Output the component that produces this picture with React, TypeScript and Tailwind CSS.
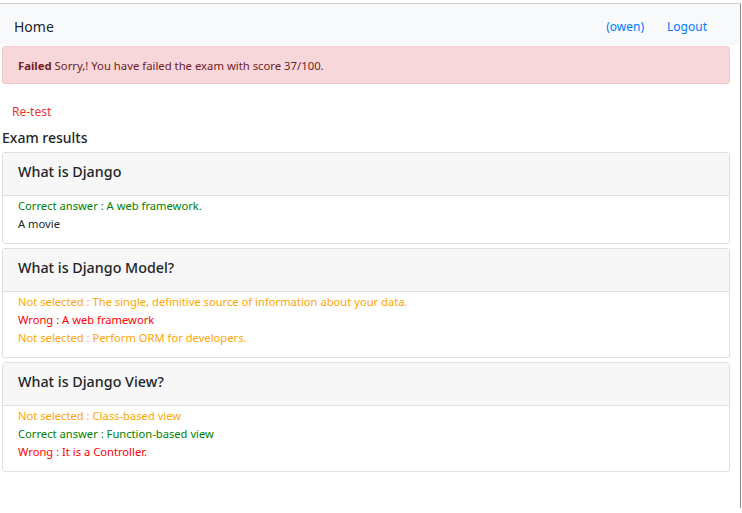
import React from "react";

type Answer = { kind: "correct" | "wrong" | "skip" | "plain"; text: string };

const QUESTIONS: { title: string; answers: Answer[] }[] = [
  {
    title: "What is Django",
    answers: [
      { kind: "correct", text: "A web framework." },
      { kind: "plain", text: "A movie" },
    ],
  },
  {
    title: "What is Django Model?",
    answers: [
      { kind: "skip", text: "The single, definitive source of information about your data." },
      { kind: "wrong", text: "A web framework" },
      { kind: "skip", text: "Perform ORM for developers." },
    ],
  },
  {
    title: "What is Django View?",
    answers: [
      { kind: "skip", text: "Class-based view" },
      { kind: "correct", text: "Function-based view" },
      { kind: "wrong", text: "It is a Controller." },
    ],
  },
];

function AnswerLine({ a }: { a: Answer }) {
  if (a.kind === "correct") return <div className="text-[#008000]">Correct answer : {a.text}</div>;
  if (a.kind === "wrong") return <div className="text-[#ff0000]">Wrong : {a.text}</div>;
  if (a.kind === "skip") return <div className="text-[#ffa500]">Not selected : {a.text}</div>;
  return <div className="text-[#212529]">{a.text}</div>;
}

export default function App() {
  return (
    <div className="w-[742px] h-[513px] bg-white pt-[3px] font-['Noto_Sans',sans-serif] text-[#212529]">
      <div className="w-[741px] h-[505px] border-t border-t-[#d0d0d0] border-r border-r-[#8a8a8a]">
        {/* navbar */}
        <nav className="h-[41px] bg-[#f8f9fa] flex items-center pt-[4px] pl-[14px] pr-[33px]">
          <span className="text-[14px] text-[#212529]">Home</span>
          <div className="ml-auto flex gap-[23px] text-[12px] text-[#007bff]">
            <span>(owen)</span>
            <span>Logout</span>
          </div>
        </nav>

        <div className="pl-[2px] w-[730px]">
          <div className="mt-px h-[38px] flex items-center pt-[3px] px-[15px] bg-[#f8d7da] border border-[#f5c6cb] rounded-[3px] text-[11.3px] text-[#721c24]">
            <b className="font-bold mr-[3px]">Failed</b> Sorry,! You have failed the exam with score 37/100.
          </div>

          <div className="mt-[19px] pl-[10px] text-[12px] text-[#e8382c]">Re-test</div>

          <h2 className="mt-[8px] text-[14px] font-medium leading-[18px]">Exam results</h2>

          <div className="mt-[5px] flex flex-col gap-[4px]">
            {QUESTIONS.map((q) => (
              <div key={q.title} className="border border-[#dfdfdf] rounded-[3px] bg-white">
                <div className="h-[43px] flex items-center pb-[4px] px-[15px] bg-[#f7f7f7] border-b border-[#dfdfdf] text-[14.3px] font-medium">
                  {q.title}
                </div>
                <div className="px-[15px] pt-px pb-[10px] text-[11.2px] leading-[18px]">
                  {q.answers.map((a, i) => (
                    <AnswerLine key={i} a={a} />
                  ))}
                </div>
              </div>
            ))}
          </div>
        </div>
      </div>
    </div>
  );
}
